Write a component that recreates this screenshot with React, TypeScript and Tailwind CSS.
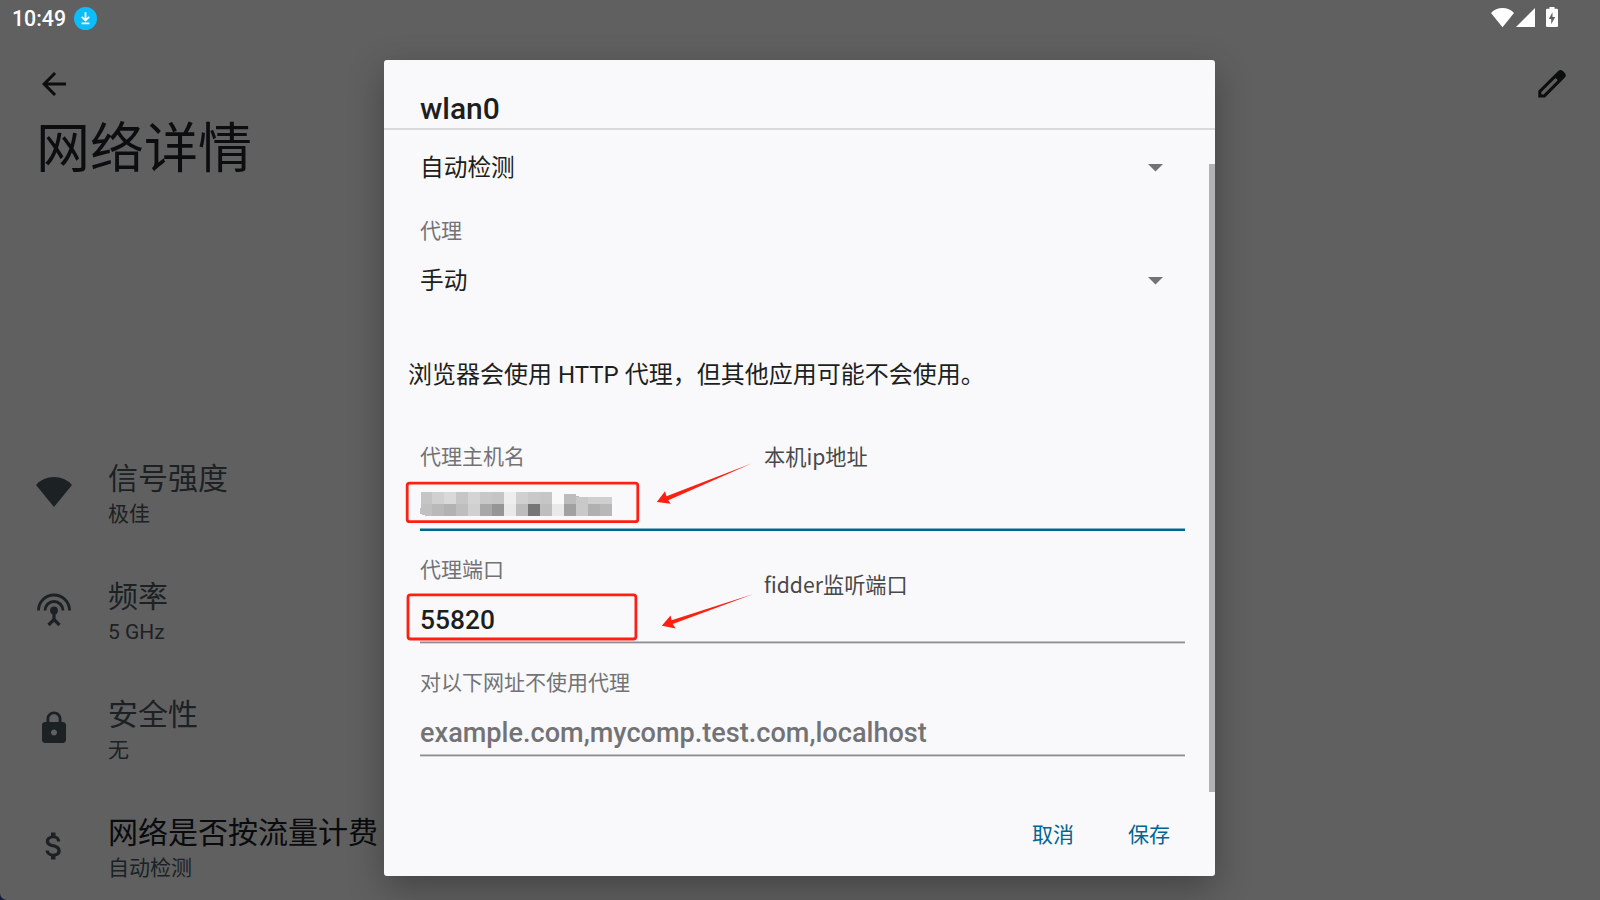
import type { ReactNode } from "react";

const latin = "font-['Roboto','Noto_Sans_CJK_SC',sans-serif]";

function StatusBar() {
  return (
    <div className="flex h-9 shrink-0 items-center justify-between pl-3 pr-[42px]">
      <div className="flex items-center gap-2 pt-px">
        <span className="text-[21.3px] leading-9 font-medium text-white">10:49</span>
        <svg className="size-[23px]" viewBox="0 0 23 23">
          <circle cx="11.5" cy="11.5" r="11.5" fill="#0dbcfb" />
          <path d="M11.5 5.2V13M7.8 9.8l3.7 3.7 3.7-3.7M7.6 16.4h7.8" fill="none" stroke="#fff" strokeWidth="1.8" />
        </svg>
      </div>
      <svg className="h-9 w-[67px]" viewBox="0 0 67 36" fill="#fff">
        <path d="M11.5 27.2L0 12.9C3 9.7 7 8 11.5 8s8.500 1.700 11.500 4.900z" />
        <path d="M25 27L44 8v19z" />
        <path fillRule="evenodd" d="M58.500 7h5v1.700h2.200q1.300 0 1.300 1.300v15.700q0 1.300-1.300 1.300h-9.400q-1.300 0-1.300-1.300V10q0-1.300 1.300-1.300h2.200zM61.500 12.200L57.800 19h2.400v5.200l4-7.200h-2.700z" />
      </svg>
    </div>
  );
}

function DetailRow({ icon, title, value, strong }: { icon: ReactNode; title: string; value: string; strong?: boolean }) {
  return (
    <div className="flex h-[118px] shrink-0 items-center gap-9">
      <div className="flex size-9 shrink-0 items-center justify-center">{icon}</div>
      <div className="flex flex-col pt-[6px] whitespace-nowrap">
        <span className={strong ? "text-[30px] leading-[38px] text-[#0a0b0c]" : "text-[30px] leading-[38px] text-[#1c2124]"}>{title}</span>
        <span className="text-[21px] leading-[32px] text-[#1c2124]">{value}</span>
      </div>
    </div>
  );
}

function Select({ value, className }: { value: string; className: string }) {
  return (
    <div className={className}>
      <span className="text-[23.7px] leading-9">{value}</span>
      <svg className="h-2 w-[15px]" viewBox="0 0 15 8">
        <path d="M0 0h15L7.500 7.500z" fill="#737375" />
      </svg>
    </div>
  );
}

function Label({ children }: { children: string }) {
  return <div className="h-7 text-[21px] leading-7 text-[#737375]">{children}</div>;
}

const mosaicTop = ["#c5c5c6", "#d0d0d1", "#d9d9da", "#c6c6c7", "#d4d4d5", "#c8c8c9", "#c5c5c6", "#eeeeef", "#d0d0d1", "#c9c9ca", "#c6c6c7", "#f9f9fb", "#bcbcbd", "#c8c8c9", "#cfcfd0", "#cfcfd0"];
const mosaicBottom = ["#c0c0c1", "#b9b9ba", "#b2b2b3", "#bebebf", "#d0d0d1", "#a8a8a9", "#959596", "#e9e9ea", "#bcbcbd", "#767677", "#bebebf", "#e9e9ea", "#a1a1a2", "#c9c9ca", "#b0b0b1", "#b8b8b9"];

function Mosaic() {
  return (
    <svg className="h-6 w-48" viewBox="0 0 192 24" shapeRendering="crispEdges">
      {mosaicTop.map((c, i) => (
        <rect key={i} x={i === 0 ? 1 : i * 12} y={i === 12 ? 2 : i > 12 ? 5 : 0} width={i === 0 ? 11 : 12} height={i === 12 ? 10 : i > 12 ? 7 : 12} fill={c} />
      ))}
      {mosaicBottom.map((c, i) => (
        <rect key={i} x={i * 12} y="12" width="12" height="12" fill={c} />
      ))}
      <path d="M144 2h7v1h4v1h4v1h-15z" fill="#bcbcbd" />
      <path d="M0 12h1v4H0zM0 22h2v1h3v1H0z" fill="#f9f9fc" />
    </svg>
  );
}

function Annotations() {
  return (
    <>
      <svg className="absolute left-[400px] top-[450px] h-[200px] w-[360px]" viewBox="400 450 360 200" fill="#ff2012">
        <rect x="407.200" y="483.200" width="230.600" height="38.500" rx="2.500" fill="none" stroke="#ff2012" strokeWidth="2.800" />
        <rect x="408" y="594.800" width="227.900" height="44.200" rx="2.500" fill="none" stroke="#ff2012" strokeWidth="2.800" />
        <path d="M656.800 502l8.200-10.700 1.500 4.900L752 463.300l-83.700 37 2.400 3.500z" />
        <path d="M661.800 625.700l8.800-10.100 1 4.700L753.500 594l-80.800 30 3 4.600z" />
      </svg>
      <span className="absolute left-[764px] top-[441px] font-['Noto_Sans_CJK_SC',sans-serif] text-[21.2px] leading-[30px] whitespace-nowrap text-[#48484a]">本机ip地址</span>
      <span className="absolute left-[764px] top-[569px] font-['Noto_Sans_CJK_SC',sans-serif] text-[21.2px] leading-[30px] whitespace-nowrap text-[#48484a]">fidder监听端口</span>
    </>
  );
}

export default function App() {
  return (
    <div className={"relative h-[900px] w-[1600px] overflow-hidden bg-[#141b3c] " + latin}>
      <div className="flex h-full flex-col overflow-hidden rounded-bl-[7px] bg-[#606060]">
        <StatusBar />
        <div className="flex h-[66px] shrink-0 items-end justify-between pl-9 pr-[30px]">
          <svg className="size-9" viewBox="0 0 24 24" fill="#0c0d0d">
            <path d="M20 11H7.830l5.590-5.590L12 4l-8 8 8 8 1.410-1.410L7.830 13H20z" />
          </svg>
          <svg className="size-9" viewBox="0 0 36 36">
            <path
              fillRule="evenodd"
              fill="#0c0d0d"
              d="M4.300 31.600v-6.800L24.200 5q2.400-2 4.900.2l1.700 1.700q2 2.300.1 4.700L11 31.600zM7.400 28.500h2.200l13.900-14.100q-.1-2-2.200-2.200L7.400 26.100z"
            />
          </svg>
        </div>
        <h1 className="h-[328px] shrink-0 pl-9 pt-[13px] text-[54px] leading-[70px] text-[#0b0d0e]">网络详情</h1>
        <div className="flex shrink-0 flex-col pl-9 pt-[3px]">
          <DetailRow
            title="信号强度"
            value="极佳"
            icon={
              <svg className="size-9 shrink-0" viewBox="0 0 36 36" fill="#1c2124">
                <path d="M18 33L0 11Q7 3 18 3t18 8z" />
              </svg>
            }
          />
          <DetailRow
            title="频率"
            value="5 GHz"
            icon={
              <svg className="size-9 shrink-0" viewBox="0 0 36 36" fill="none" stroke="#1c2124" strokeWidth="2.900">
                <path d="M2.500 18.500a15.500 15.500 0 0 1 31 0M9 18.500a9 9 0 0 1 18 0" />
                <circle cx="18" cy="18.500" r="3.900" fill="#1c2124" stroke="none" />
                <path d="M18 19v8M12.500 33l5.500-5.500 5.500 5.500" strokeWidth="3.200" />
              </svg>
            }
          />
          <DetailRow
            title="安全性"
            value="无"
            icon={
              <svg className="size-9 shrink-0" viewBox="0 0 24 24" fill="#1c2124">
                <path d="M18 8h-1V6c0-2.760-2.240-5-5-5S7 3.240 7 6v2H6c-1.100 0-2 .9-2 2v10c0 1.100.9 2 2 2h12c1.100 0 2-.9 2-2V10c0-1.100-.9-2-2-2zm-6 9c-1.100 0-2-.9-2-2s.9-2 2-2 2 .9 2 2-.9 2-2 2zm3.100-9H8.900V6c0-1.710 1.390-3.100 3.100-3.100s3.100 1.390 3.100 3.100z" />
              </svg>
            }
          />
          <DetailRow
            strong
            title="网络是否按流量计费"
            value="自动检测"
            icon={
              <svg className="size-9 shrink-0" viewBox="0 0 24 24" fill="#1c2124">
                <path d="M11.800 10.900c-2.270-.59-3-1.200-3-2.150 0-1.090 1.010-1.850 2.700-1.850 1.780 0 2.440.85 2.500 2.100h2.210c-.07-1.720-1.120-3.300-3.210-3.810V3h-3v2.160c-1.940.42-3.500 1.680-3.500 3.610 0 2.310 1.910 3.460 4.700 4.130 2.500.6 3 1.480 3 2.410 0 .69-.49 1.790-2.700 1.790-2.060 0-2.870-.92-2.980-2.100h-2.200c.12 2.190 1.760 3.420 3.680 3.830V21h3v-2.150c1.950-.37 3.500-1.500 3.500-3.550 0-2.840-2.430-3.810-4.700-4.400z" />
              </svg>
            }
          />
        </div>
      </div>

      <div role="dialog" className="absolute left-[384px] top-[60px] flex h-[816px] w-[831px] flex-col rounded-[3px] bg-[#f9f9fc] text-[#1d1e20] shadow-[0_12px_36px_rgba(0,0,0,0.3)]">
        <div className="h-[70px] border-b-2 border-[#dadadc] pl-9 pt-[29px] text-[30px] leading-[40px] font-medium">wlan0</div>
        <div className="flex h-[662px] justify-between">
          <div className="flex w-[801px] flex-col pl-9">
            <Select value="自动检测" className="flex h-[74px] items-center justify-between pr-[22px] pt-[2px]" />
            <div className="flex h-[53px] items-center">
              <Label>代理</Label>
            </div>
            <Select value="手动" className="flex h-[47px] items-center justify-between pr-[22px]" />
            <p className="-ml-3 h-[139px] text-2xl leading-[143px]">浏览器会使用 HTTP 代理，但其他应用可能不会使用。</p>
            <Label>代理主机名</Label>
            <div className="mb-[25px] h-[60px] border-b-2 border-[#006590] pt-[21px] shadow-[inset_0_-1px_0_#7db3c9]">
              <Mosaic />
            </div>
            <Label>代理端口</Label>
            <div className="mb-[27px] h-[58px] pt-[20px] text-[26.4px] leading-[32px] font-medium shadow-[inset_0_-1px_0_#c3c3c5,0_1px_0_#8e8e90,0_2px_0_#d6d6d8]">55820</div>
            <Label>对以下网址不使用代理</Label>
            <div className="h-[58px] pt-[20px] text-[27.1px] leading-[32px] font-medium text-[#737375] shadow-[inset_0_-1px_0_#c3c3c5,0_1px_0_#8e8e90,0_2px_0_#d6d6d8]">example.com,mycomp.test.com,localhost</div>
          </div>
          <div className="mt-[34px] h-[628px] w-1.5 bg-[#b2b2b4]" />
        </div>
        <div className="flex h-[84px] items-center justify-end gap-[54px] pr-[45px] pt-[4px] text-[21px] text-[#006590]">
          <button>取消</button>
          <button>保存</button>
        </div>
      </div>
      <Annotations />
    </div>
  );
}
